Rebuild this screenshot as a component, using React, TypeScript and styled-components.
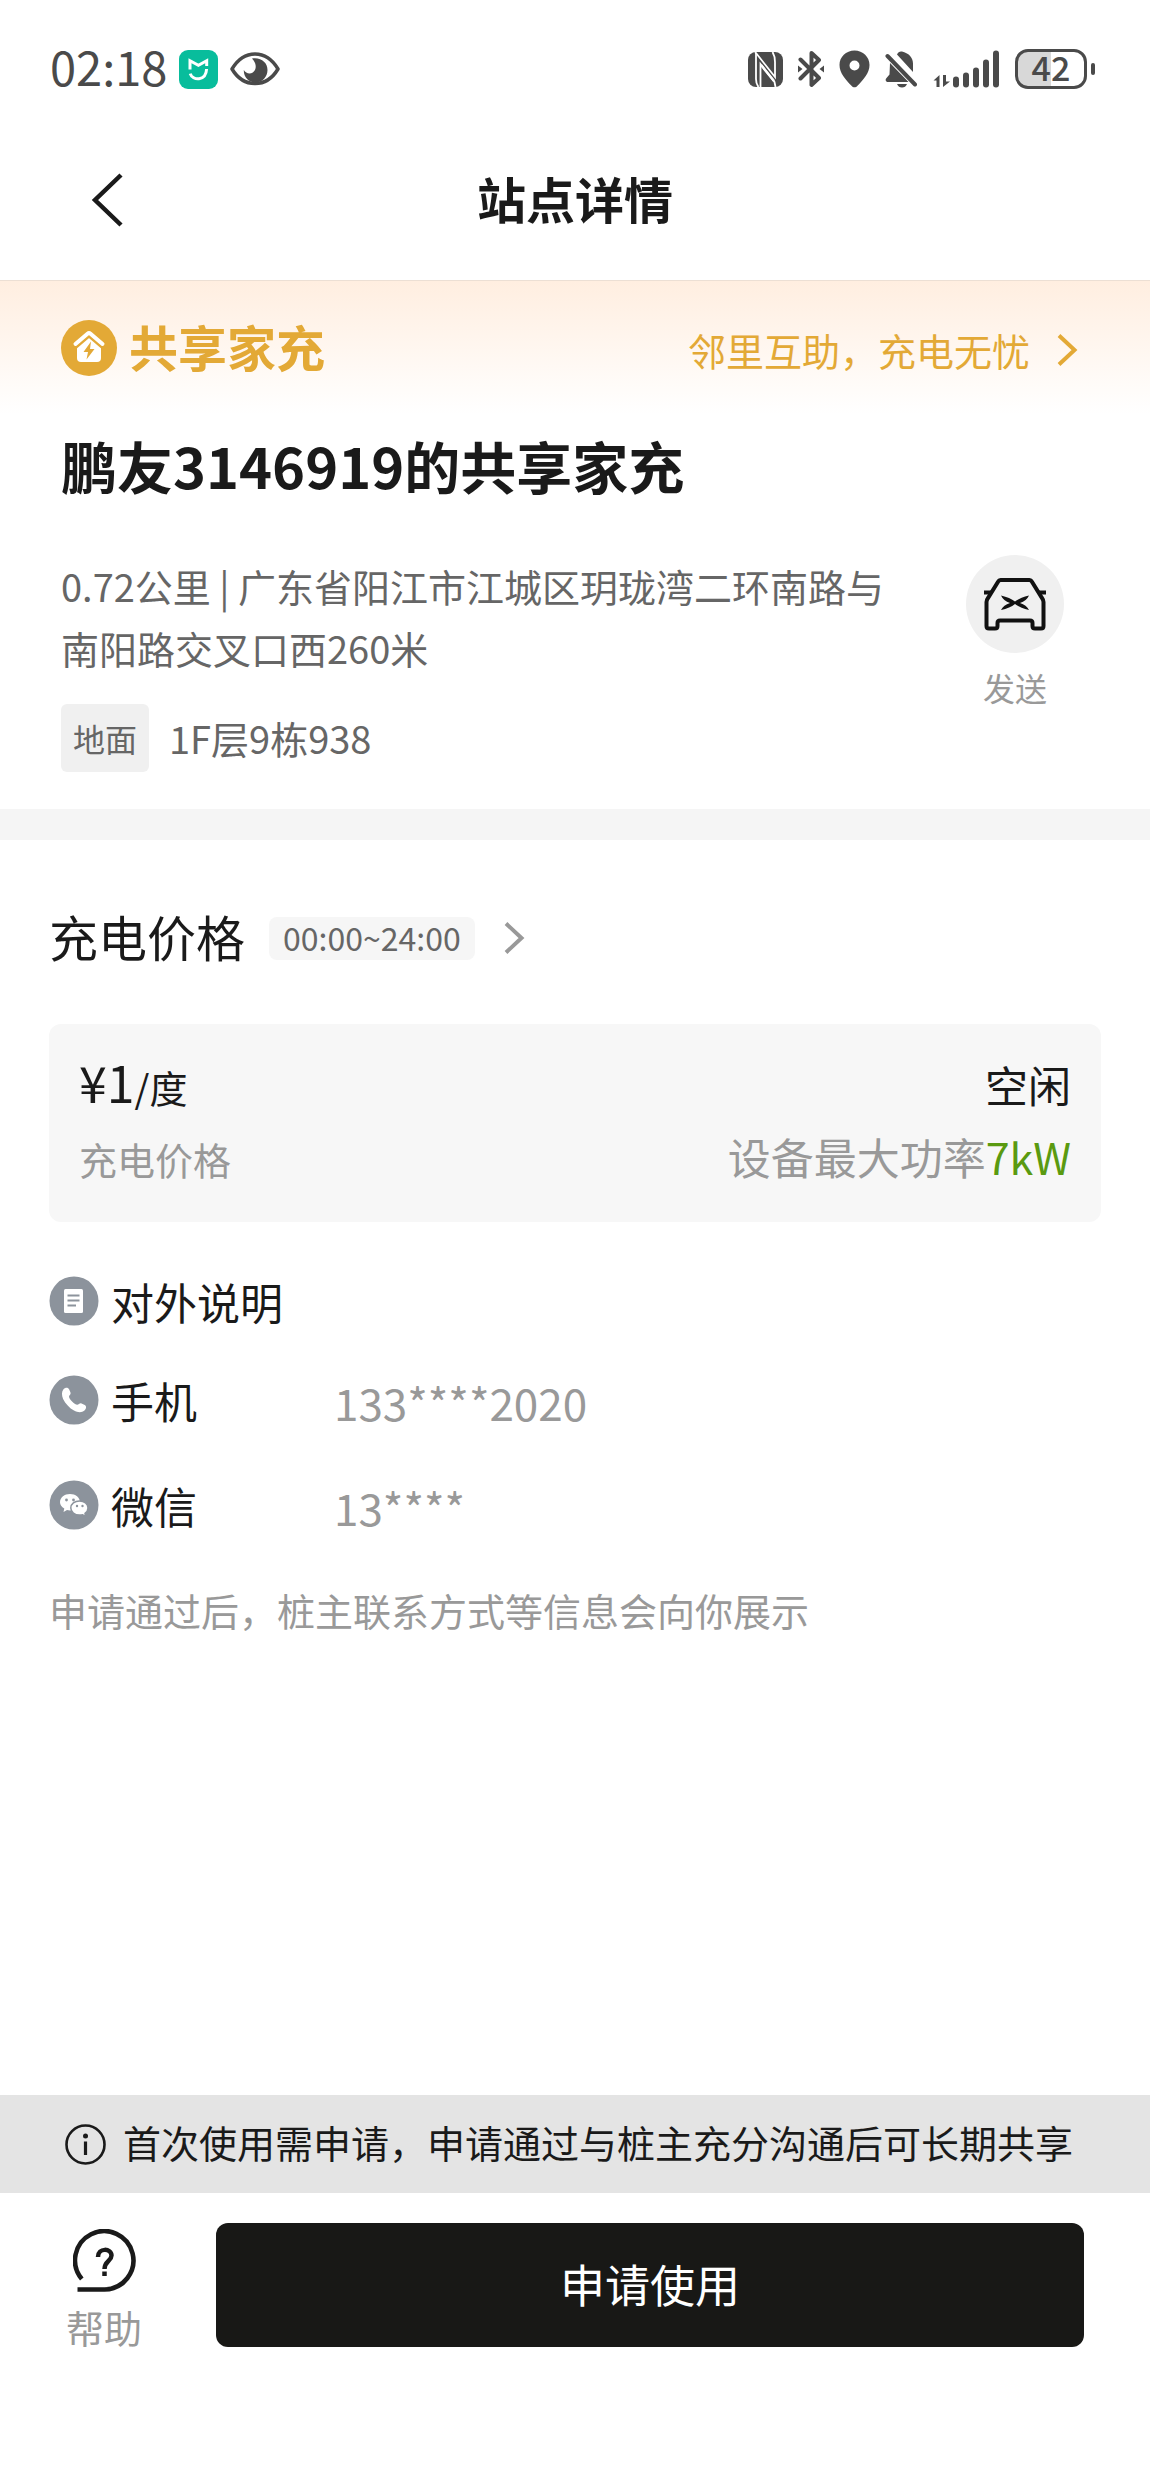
import React from "react";
import styled, { createGlobalStyle } from "styled-components";

const ink = "#1a1a1a";
const muted = "#999999";
const gold = "#e3a936";
const system = "#4a4a4a";

const GlobalStyle = createGlobalStyle`
  *, *::before, *::after { box-sizing: border-box; }
  body {
    margin: 0;
    background: #ffffff;
    color: ${ink};
    font-family: "Noto Sans CJK SC", "Noto Sans", sans-serif;
  }
  h1, h2, p, dl, dt, dd { margin: 0; font-weight: 400; }
  button {
    margin: 0;
    padding: 0;
    border: 0;
    background: none;
    color: inherit;
    font: inherit;
    cursor: pointer;
  }
  a { color: inherit; text-decoration: none; }
  svg { display: block; flex: none; }
`;

const Page = styled.div`
  display: flex;
  flex-direction: column;
  min-height: 100vh;
`;

/* ---------- status bar ---------- */

const StatusBar = styled.div`
  display: flex;
  justify-content: space-between;
  align-items: center;
  height: 120px;
  padding: 18px 55px 0 50px;
  color: ${system};
`;

const StatusGroup = styled.div<{ $gap: number }>`
  display: flex;
  align-items: center;
  gap: ${(p) => p.$gap}px;
`;

const Clock = styled.time`
  padding-bottom: 6px;
  font-size: 47px;
  line-height: 60px;
`;

const BatteryWrap = styled.div`
  display: flex;
  align-items: center;
  gap: 4px;
`;

const BatteryBody = styled.div`
  display: flex;
  justify-content: center;
  width: 72px;
  height: 40px;
  border: 3px solid ${system};
  border-radius: 13px;
  background: linear-gradient(to right, #d8d8d8 50%, #ffffff 50%);
  font-size: 34px;
  font-weight: 500;
  line-height: 30px;
`;

const BatteryTip = styled.div`
  width: 4px;
  height: 12px;
  border-radius: 2px;
  background: ${system};
`;

/* ---------- navigation ---------- */

const NavBar = styled.header`
  display: grid;
  grid-template-columns: 1fr auto 1fr;
  align-items: center;
  height: 160px;
  padding: 0 88px;
`;

const NavTitle = styled.h1`
  padding-bottom: 4px;
  font-size: 49px;
  font-weight: 700;
  line-height: 60px;
`;

const BackButton = styled.button`
  justify-self: start;
`;

/* ---------- promotion banner ---------- */

const Banner = styled.div`
  display: flex;
  justify-content: space-between;
  align-items: center;
  height: 134px;
  padding: 0 72px 0 61px;
  border-top: 1px solid #ecdfd4;
  background: linear-gradient(#ffeee0, #ffffff);
  color: ${gold};
`;

const Brand = styled.div`
  display: flex;
  align-items: center;
  gap: 12px;
`;

const BrandName = styled.span`
  padding-bottom: 4px;
  font-size: 49px;
  font-weight: 700;
  line-height: 60px;
`;

const BannerLink = styled.a`
  display: flex;
  align-items: center;
  gap: 26px;
  padding-top: 4px;
  font-size: 38px;
  line-height: 48px;
`;

/* ---------- station ---------- */

const Station = styled.section`
  padding: 11px 86px 37px 61px;
`;

const StationName = styled.h2`
  font-size: 56px;
  font-weight: 700;
  line-height: 80px;
`;

const StationBody = styled.div`
  display: flex;
  justify-content: space-between;
  align-items: flex-start;
  gap: 64px;
  margin-top: 50px;
`;

const StationText = styled.div`
  flex: 1;
  color: #666666;
  font-size: 38px;
  line-height: 62px;
`;

const FloorRow = styled.div`
  display: flex;
  align-items: center;
  gap: 20px;
  margin-top: 25px;
  line-height: 68px;
`;

const Tag = styled.span`
  padding: 0 12px;
  border-radius: 6px;
  background: #f0f0f0;
  font-size: 32px;
`;

const SendButton = styled.button`
  display: flex;
  flex-direction: column;
  align-items: center;
  gap: 14px;
  color: ${muted};
  font-size: 32px;
  line-height: 40px;
`;

const Divider = styled.div`
  height: 31px;
  background: #f5f5f5;
`;

/* ---------- price ---------- */

const Details = styled.main`
  flex: 1;
  padding: 66px 49px 0;
`;

const PriceHeader = styled.div`
  display: flex;
  align-items: center;
  gap: 24px;
`;

const PriceTitle = styled.h2`
  font-size: 49px;
  line-height: 60px;
`;

const PeriodButton = styled.button`
  display: flex;
  align-items: center;
  gap: 28px;
  padding-top: 4px;
`;

const Period = styled.span`
  padding: 0 14px 3px;
  border-radius: 8px;
  background: #f6f6f6;
  color: #666666;
  font-size: 32px;
  line-height: 40px;
`;

const PriceCard = styled.div`
  display: grid;
  gap: 15px;
  margin-top: 58px;
  padding: 27px 30px 39px;
  border-radius: 12px;
  background: #f7f7f7;
`;

const CardRow = styled.div<{ $muted?: boolean }>`
  display: flex;
  justify-content: space-between;
  align-items: baseline;
  color: ${(p) => (p.$muted ? muted : ink)};
  font-size: ${(p) => (p.$muted ? 38 : 50)}px;
  line-height: ${(p) => (p.$muted ? 48 : 60)}px;
`;

const Unit = styled.span`
  font-size: 38px;
`;

const CardValue = styled.span`
  font-size: 43px;
  line-height: 48px;
`;

const Power = styled.span`
  color: #5a9a10;
`;

/* ---------- contact ---------- */

const NoteTitle = styled.div`
  display: flex;
  align-items: center;
  gap: 12px;
  margin-top: 54px;
  font-size: 43px;
  line-height: 50px;
`;

const ContactList = styled.dl`
  display: grid;
  gap: 55px;
  margin-top: 49px;
`;

const ContactRow = styled.div`
  display: flex;
  align-items: center;
  font-size: 43px;
  line-height: 50px;
`;

const ContactLabel = styled.dt`
  display: flex;
  align-items: center;
  gap: 12px;
  width: 285px;
`;

const ContactValue = styled.dd`
  height: 46px;
  color: ${muted};
  font-size: 44px;
`;

const Hint = styled.p`
  margin-top: 56px;
  color: ${muted};
  font-size: 38px;
  line-height: 48px;
`;

/* ---------- footer ---------- */

const Notice = styled.div`
  display: flex;
  align-items: center;
  gap: 17px;
  height: 98px;
  padding: 0 65px;
  background: #e4e4e4;
  font-size: 38px;
  line-height: 48px;
  white-space: nowrap;
`;

const NoticeText = styled.p`
  padding-bottom: 4px;
`;

const Actions = styled.div`
  display: flex;
  gap: 74px;
  padding: 30px 66px 128px;
`;

const HelpButton = styled.button`
  display: flex;
  flex-direction: column;
  align-items: center;
  gap: 15px;
  padding-top: 6px;
  color: ${muted};
  font-size: 38px;
  line-height: 40px;
`;

const ApplyButton = styled.button`
  flex: 1;
  height: 124px;
  padding-bottom: 4px;
  border-radius: 12px;
  background: #181816;
  color: #ffffff;
  font-size: 45px;
`;

/* ---------- icons ---------- */

const HomeAppIcon = () => (
  <svg width="39" height="39" viewBox="0 0 39 39" fill="none">
    <rect width="39" height="39" rx="9" fill="#08bd9c" />
    <path d="M11 19.5V10.8l8.4 4.6 8.300-4.600v5.200" stroke="#fff" strokeWidth="3" />
    <path d="M11.200 23.600C13.500 31 27 31.500 27.600 19" stroke="#fff" strokeWidth="3" />
  </svg>
);

const EyeIcon = () => (
  <svg width="50" height="36" viewBox="0 0 50 36" fill="none">
    <path
      d="M2 18C8 8 16 3 25 3s17 5 23 15c-6 10-14 14.500-23 14.500S8 28 2 18Z"
      stroke={system}
      strokeWidth="3.500"
      strokeLinejoin="round"
    />
    <path
      d="M22 7.500c9-1.500 15.500 4 15.500 11.500 0 7-5.500 12.500-12 12.500C18.500 31.500 13.500 26 13.800 19c2 3.500 6 4.500 9 2.500 4-2.500 4-9.500-.8-14Z"
      fill={system}
    />
  </svg>
);

const NfcIcon = () => (
  <svg width="35" height="35" viewBox="0 0 35 35" fill="none">
    <rect width="35" height="35" rx="8" fill={system} />
    <path d="M7.500 0 8 2v25q0 5 2.500 8" stroke="#fff" strokeWidth="1.800" />
    <path d="M8 1 27 25V10q0-6-2.500-10" stroke="#fff" strokeWidth="1.800" />
    <path d="M12.500 35V12l14 18 1 5" stroke="#fff" strokeWidth="1.800" />
    <path d="M13 13 26 29" stroke="#fff" strokeWidth="2.400" />
  </svg>
);

const BluetoothIcon = () => (
  <svg width="26" height="38" viewBox="0 0 26 38" fill={system}>
    <path
      d="M2.500 9.500 21 28l-7.500 7V3L21 10 2.500 28.500"
      fill="none"
      stroke={system}
      strokeWidth="4"
      strokeLinejoin="round"
      strokeLinecap="round"
    />
    <path d="M0 15.500 4.500 19 0 22.500ZM26 15.500 21.500 19l4.500 3.500Z" />
  </svg>
);

const PinIcon = () => (
  <svg width="31" height="38" viewBox="0 0 31 38" fill={system}>
    <path
      fillRule="evenodd"
      d="M15.500.5C24 .5 30.500 7 30.500 15c0 8-6 14.500-12 20.800-1.800 2-4.200 2-6 0C6.500 29.500.5 23 .5 15 .5 7 7 .5 15.500.5Zm0 10a5 5 0 1 0 0 10 5 5 0 0 0 0-10Z"
    />
  </svg>
);

const MutedBellIcon = () => (
  <svg width="32" height="38" viewBox="0 0 32 38" fill={system}>
    <path d="M5 13 23.500 32H2q-2.500-1.500-.5-4l3-3.500ZM12 4.500C13 2 15 1 17 1.500c6.500 1.500 11 6 11 12V22Z" />
    <path d="M12 34h10q-1.500 3.500-5 3.500T12 34Z" />
    <path d="M2.500 6 30 34.500" stroke={system} strokeWidth="4" strokeLinecap="round" />
  </svg>
);

const signalBars = [
  { x: 22, h: 11 },
  { x: 32, h: 15 },
  { x: 42, h: 20 },
  { x: 52, h: 28 },
  { x: 62, h: 37 },
];

const SignalIcon = () => (
  <svg width="68" height="38" viewBox="0 0 68 38" fill={system}>
    <path d="M7.500 37h-3v-6.500H1.500L7.500 25ZM11 25h3v6.500h4L11 37Z" />
    {signalBars.map((bar) => (
      <rect key={bar.x} x={bar.x - 1} y={37.5 - bar.h} width="6" height={bar.h} rx="3" />
    ))}
  </svg>
);

const BackIcon = () => (
  <svg width="36" height="54" viewBox="0 0 36 54" fill="none">
    <path d="M33 2 7 27l26 25" stroke={ink} strokeWidth="4.500" />
  </svg>
);

const ChevronIcon = ({ color }: { color: string }) => (
  <svg width="22" height="32" viewBox="0 0 22 32" fill="none">
    <path d="M3 1.500 18.500 16 3 30.500" stroke={color} strokeWidth="4" />
  </svg>
);

const BrandIcon = () => (
  <svg width="56" height="56" viewBox="0 0 56 56" fill="none">
    <circle cx="28" cy="28" r="28" fill={gold} />
    <path
      d="M16 25.500 28 15l12 10.500V38q0 4-4 4H20q-4 0-4-4Z"
      fill="#fff"
    />
    <path d="M14.500 27.500 28 16l13.500 11.500" stroke={gold} strokeWidth="3" />
    <path
      d="M14.500 24 26.500 13.800q1.500-1.300 3 0L41.500 24"
      stroke="#fff"
      strokeWidth="4"
      strokeLinecap="round"
    />
    <path d="m30 21.500-7.500 10.500H27l-1.500 7.500L33.500 29H29Z" fill={gold} />
  </svg>
);

const CarIcon = () => (
  <svg width="98" height="98" viewBox="0 0 98 98" fill="none">
    <circle cx="49" cy="49" r="49" fill="#f0f0f0" />
    <path
      d="M34.500 25h29q1.500 0 2.300 1.500L76 43q1.500 2 1.500 4v24q0 2.500-2.500 2.500h-6q-2.500 0-2.500-2.500v-3q0-2.500-2.500-2.500H34q-2.500 0-2.500 2.500v3q0 2.500-2.500 2.500h-6q-2.500 0-2.500-2.500V47q0-2 1.500-4l10.200-16.500Q33 25 34.500 25Z"
      stroke="#111"
      strokeWidth="4"
    />
    <path d="M18 37.500h7M73 37.500h7" stroke="#111" strokeWidth="4" />
    <path
      d="M35 40.500q9 2 14 6 5-4 14-6Q60.500 46 54 48q6.500 2 9 7-9-2-14-6-5 4-14 6 2.500-5 9-7-6.500-2-9-7.500Z"
      fill="#111"
    />
  </svg>
);

const NoteIcon = () => (
  <svg width="50" height="50" viewBox="0 0 50 50">
    <circle cx="25" cy="25" r="24.500" fill="#8c939c" />
    <rect x="15" y="13" width="19" height="24" rx="1.500" fill="#fff" />
    <path d="M18.500 19.500h12M18.500 24.500h12M18.500 29.500h8.500" stroke="#8c939c" strokeWidth="2" />
  </svg>
);

const PhoneIcon = () => (
  <svg width="50" height="50" viewBox="0 0 50 50">
    <circle cx="25" cy="25" r="24.500" fill="#8c939c" />
    <path
      d="M14.500 14.200c2-2.200 4.700-2 5.700.3l1.300 3c.7 1.800-1.300 2.600-1.500 4 .2 2.800 5.300 8 8.300 8.200 1.400 0 2.400-2 4.200-1.300l3.300 1.600c2 1.200 1.600 3.800-.6 5.800-2.200 1.900-6.400 2-10.200-.2-4.500-2.700-8.600-7-10.900-11.700-1.500-3.500-1.600-7.500.4-9.700Z"
      fill="#fff"
    />
  </svg>
);

const WechatIcon = () => (
  <svg width="50" height="50" viewBox="0 0 50 50">
    <circle cx="25" cy="25" r="24.500" fill="#8c939c" />
    <path
      d="M21 14c5.500 0 10 3.500 10 8.200S26.500 30.500 21 30.500c-1 0-2-.1-3-.4L14.500 32l.8-3.500c-2.700-1.500-4.300-3.700-4.300-6.300C11 17.500 15.500 14 21 14Z"
      fill="#fff"
    />
    <path
      d="M30.500 21c4.800 0 8.500 3 8.500 7 0 2.200-1.200 4-3 5.300l.6 3-3-1.600c-1 .3-2 .4-3.100.4-4.800 0-8.700-3-8.700-7.100s3.900-7 8.700-7Z"
      fill="#fff"
      stroke="#8c939c"
      strokeWidth="1.500"
    />
    <g fill="#8c939c">
      <circle cx="17.500" cy="20" r="1.400" />
      <circle cx="24.500" cy="20" r="1.400" />
      <circle cx="28" cy="26" r="1.200" />
      <circle cx="33.500" cy="26" r="1.200" />
    </g>
  </svg>
);

const InfoIcon = () => (
  <svg width="41" height="41" viewBox="0 0 41 41" fill="none">
    <circle cx="20.500" cy="20.500" r="19" stroke={ink} strokeWidth="2.600" />
    <circle cx="20.500" cy="12" r="2.500" fill={ink} />
    <path d="M20.500 17.500V31" stroke={ink} strokeWidth="3.200" />
  </svg>
);

const HelpIcon = () => (
  <svg width="63" height="63" viewBox="0 0 63 63" fill="none" stroke={ink}>
    <path
      d="M8.800 50A29.200 29.200 0 1 1 31.500 60.500H4.500"
      strokeWidth="4.600"
      strokeLinejoin="round"
    />
    <path d="M25 28c0-9.500 13.500-9 13.500-1.500 0 5.500-7 5.500-7 13.500" strokeWidth="4.500" />
    <path d="M31.500 42.500V47" strokeWidth="4.500" />
  </svg>
);

const contacts = [
  { label: "手机", value: "133****2020", icon: <PhoneIcon /> },
  { label: "微信", value: "13****", icon: <WechatIcon /> },
];

export default function App() {
  return (
    <Page>
      <GlobalStyle />
      <StatusBar>
        <StatusGroup $gap={12}>
          <Clock>02:18</Clock>
          <HomeAppIcon />
          <EyeIcon />
        </StatusGroup>
        <StatusGroup $gap={15}>
          <NfcIcon />
          <BluetoothIcon />
          <PinIcon />
          <MutedBellIcon />
          <SignalIcon />
          <BatteryWrap>
            <BatteryBody>42</BatteryBody>
            <BatteryTip />
          </BatteryWrap>
        </StatusGroup>
      </StatusBar>

      <NavBar>
        <BackButton type="button" aria-label="返回">
          <BackIcon />
        </BackButton>
        <NavTitle>站点详情</NavTitle>
      </NavBar>

      <Banner>
        <Brand>
          <BrandIcon />
          <BrandName>共享家充</BrandName>
        </Brand>
        <BannerLink href="#about">
          邻里互助，充电无忧
          <ChevronIcon color={gold} />
        </BannerLink>
      </Banner>

      <Station>
        <StationName>鹏友3146919的共享家充</StationName>
        <StationBody>
          <StationText>
            <p>0.72公里 | 广东省阳江市江城区玥珑湾二环南路与南阳路交叉口西260米</p>
            <FloorRow>
              <Tag>地面</Tag>
              <span>1F层9栋938</span>
            </FloorRow>
          </StationText>
          <SendButton type="button">
            <CarIcon />
            发送
          </SendButton>
        </StationBody>
      </Station>

      <Divider />

      <Details>
        <PriceHeader>
          <PriceTitle>充电价格</PriceTitle>
          <PeriodButton type="button">
            <Period>00:00~24:00</Period>
            <ChevronIcon color={muted} />
          </PeriodButton>
        </PriceHeader>

        <PriceCard>
          <CardRow>
            <span>
              ¥1<Unit>/度</Unit>
            </span>
            <CardValue>空闲</CardValue>
          </CardRow>
          <CardRow $muted>
            <span>充电价格</span>
            <CardValue>
              设备最大功率<Power>7kW</Power>
            </CardValue>
          </CardRow>
        </PriceCard>

        <NoteTitle>
          <NoteIcon />
          对外说明
        </NoteTitle>
        <ContactList>
          {contacts.map((contact) => (
            <ContactRow key={contact.label}>
              <ContactLabel>
                {contact.icon}
                {contact.label}
              </ContactLabel>
              <ContactValue>{contact.value}</ContactValue>
            </ContactRow>
          ))}
        </ContactList>
        <Hint>申请通过后，桩主联系方式等信息会向你展示</Hint>
      </Details>

      <footer>
        <Notice>
          <InfoIcon />
          <NoticeText>首次使用需申请，申请通过与桩主充分沟通后可长期共享</NoticeText>
        </Notice>
        <Actions>
          <HelpButton type="button">
            <HelpIcon />
            帮助
          </HelpButton>
          <ApplyButton type="button">申请使用</ApplyButton>
        </Actions>
      </footer>
    </Page>
  );
}
